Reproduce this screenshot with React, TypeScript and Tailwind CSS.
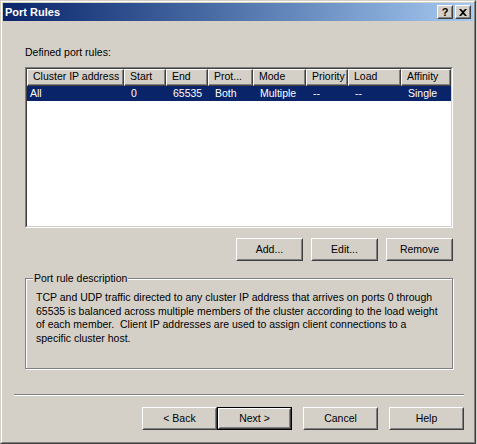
import React from "react";

const face = "font-['Liberation_Sans',Arial,sans-serif] text-[10.5px] text-black";

const cols = [
  { name: "Cluster IP address", w: 97 },
  { name: "Start", w: 42 },
  { name: "End", w: 42 },
  { name: "Prot...", w: 45 },
  { name: "Mode", w: 53 },
  { name: "Priority", w: 42 },
  { name: "Load", w: 53 },
  { name: "Affinity", w: 50 },
];

const row = ["All", "0", "65535", "Both", "Multiple", "--", "--", "Single"];

function Raised({ children, className = "" }: { children: React.ReactNode; className?: string }) {
  return (
    <div className={"border border-t-white border-l-white border-r-[#404040] border-b-[#404040] bg-[#d4d0c8] " + className}>
      <div className="flex h-full w-full items-center justify-center border border-t-[#d4d0c8] border-l-[#d4d0c8] border-r-[#808080] border-b-[#808080]">
        {children}
      </div>
    </div>
  );
}

function Button({ label, w = "w-[75px]", isDefault = false }: { label: string; w?: string; isDefault?: boolean }) {
  if (isDefault) {
    return (
      <div className={"h-[23px] border border-black " + w}>
        <Raised className="h-full w-full">{label}</Raised>
      </div>
    );
  }
  return <Raised className={"h-[23px] " + w}>{label}</Raised>;
}

export default function App() {
  return (
    <div className={"w-[477px] h-[444px] bg-[#d4d0c8] " + face}>
      <div className="w-[476px] h-[444px] border border-t-[#d4d0c8] border-l-[#d4d0c8] border-r-[#404040] border-b-[#404040]">
        <div className="flex h-full flex-col border border-t-white border-l-white border-r-[#808080] border-b-[#808080] p-px">
          {/* title bar */}
          <div className="flex h-[18px] items-center bg-gradient-to-r from-[#0a246a] to-[#a6caf0] pl-[2px] pr-[2px]">
            <span className="text-[11px] font-bold text-white">Port Rules</span>
            <div className="ml-auto flex gap-[2px]">
              <Raised className="h-[14px] w-[16px]">
                <span className="text-[11px] font-bold leading-none">?</span>
              </Raised>
              <Raised className="h-[14px] w-[16px]">
                <svg width="8" height="7" viewBox="0 0 8 7">
                  <path d="M0 0h2l2 2 2-2h2L5 3.5 8 7H6L4 5 2 7H0l3-3.5z" fill="black" />
                </svg>
              </Raised>
            </div>
          </div>

          {/* body */}
          <div className="flex flex-col">
            <div className="ml-[22px] mt-[25px] leading-[13px]">Defined port rules:</div>

            <div className="ml-[22px] mt-[8px] h-[161px] w-[428px] border border-t-[#808080] border-l-[#808080] border-r-white border-b-white">
              <div className="h-full w-full border border-t-[#404040] border-l-[#404040] border-r-[#d4d0c8] border-b-[#d4d0c8] bg-white">
                <div className="flex">
                  {cols.map((c) => (
                    <div
                      key={c.name}
                      style={{ width: c.w }}
                      className="h-[17px] shrink-0 border border-t-white border-l-white border-r-[#404040] border-b-[#404040] bg-[#d4d0c8]"
                    >
                      <div className="flex h-full items-center border-r border-b border-r-[#808080] border-b-[#808080] pl-[5px] whitespace-nowrap overflow-hidden">
                        {c.name}
                      </div>
                    </div>
                  ))}
                </div>
                <div className="flex h-[15px] w-[424px] items-center bg-[#0a246a] text-white">
                  {row.map((v, i) => (
                    <div
                      key={i}
                      style={{ width: cols[i].w }}
                      className={"shrink-0 whitespace-nowrap " + (i === 0 ? "pl-[3px]" : "pl-[7px]")}
                    >
                      {v}
                    </div>
                  ))}
                </div>
              </div>
            </div>

            <div className="ml-[233px] mt-[10px] flex gap-[8px]">
              <Button label="Add..." w="w-[67px]" />
              <Button label="Edit..." w="w-[67px]" />
              <Button label="Remove" w="w-[67px]" />
            </div>

            <div className="relative ml-[22px] mt-[17px] h-[91px] w-[428px] border border-[#808080] shadow-[inset_1px_1px_0_white,1px_1px_0_white]">
              <span className="absolute -top-[7px] left-[7px] bg-[#d4d0c8] px-[1px] leading-[13px]">
                Port rule description
              </span>
              <p className="whitespace-pre pl-[10px] pt-[12px] leading-[13.5px]">
                TCP and UDP traffic directed to any cluster IP address that arrives on ports 0 through{"\n"}
                65535 is balanced across multiple members of the cluster according to the load weight{"\n"}
                of each member.  Client IP addresses are used to assign client connections to a{"\n"}
                specific cluster host.
              </p>
            </div>

            <div className="ml-[11px] mt-[25px] h-[2px] w-[450px] border-t border-b border-t-[#808080] border-b-white" />

            <div className="ml-[139px] mt-[11px] flex">
              <Button label="< Back" />
              <Button label="Next >" isDefault />
              <div className="ml-[11px]">
                <Button label="Cancel" />
              </div>
              <div className="ml-[11px]">
                <Button label="Help" />
              </div>
            </div>
          </div>
        </div>
      </div>
    </div>
  );
}
